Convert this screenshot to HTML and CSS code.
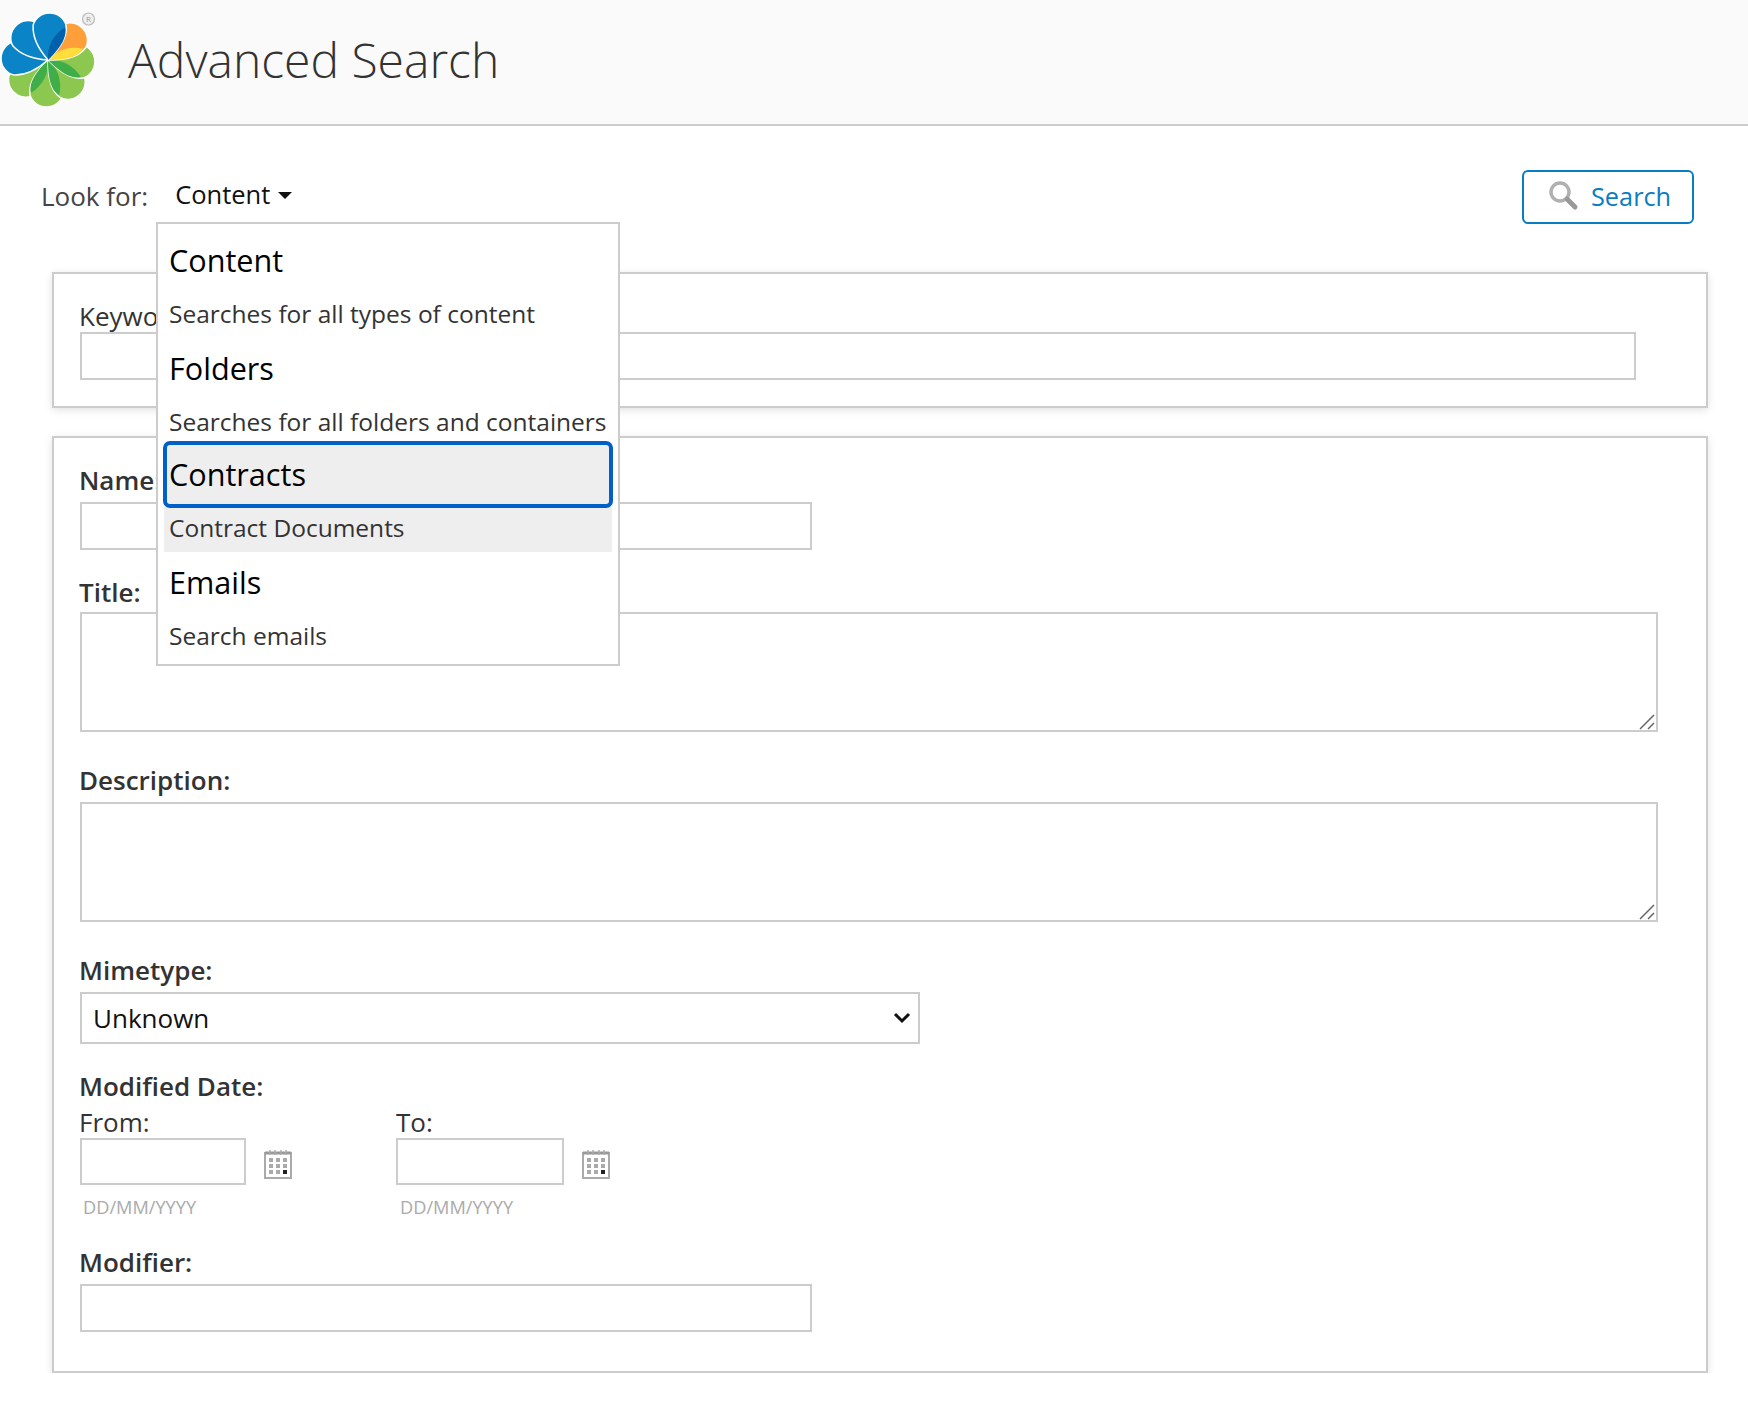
FILE: index.html
```html
<!DOCTYPE html>
<html lang="en">
<head>
    <meta charset="UTF-8">
    <meta name="viewport" content="width=device-width, initial-scale=1.0">
    <title>Advanced Search</title>
    <link rel="stylesheet" href="styles.css">
</head>
<body>
    <header class="page-header">
        <svg class="logo" width="110" height="124" viewBox="0 0 110 124">
            <defs>
                <path id="petal" d="M0 0C-7-8-15-20-14-33A16 15 0 0 1 17-33C19-20 8-8 0 0Z"/>
                <path id="fold" d="M0 0C-1-13 5-24 16-31C19-20 8-8 0 0Z" stroke="none"/>
            </defs>
            <g transform="translate(48 60) scale(1.06)" stroke="#fff" stroke-width="1.400">
                <g transform="rotate(225)" fill="#8cc850"><use href="#petal"/><use href="#fold" fill="#3fae49"/></g>
                <g transform="rotate(180)" fill="#8cc850"><use href="#petal"/><use href="#fold" fill="#3fae49"/></g>
                <g transform="rotate(135)" fill="#8cc850"><use href="#petal"/><use href="#fold" fill="#3fae49"/></g>
                <g transform="rotate(90)" fill="#8cc850"><use href="#petal"/><use href="#fold" fill="#3fae49"/></g>
                <g transform="rotate(45)" fill="#ff9f3a"><use href="#petal"/><use href="#fold" fill="#ffdd3c"/></g>
                <g transform="rotate(270)" fill="#0a84c6"><use href="#petal"/><use href="#fold" fill="#0060ac"/></g>
                <g transform="rotate(315)" fill="#0a84c6"><use href="#petal"/><use href="#fold" fill="#0060ac"/></g>
                <g fill="#0a84c6"><use href="#petal"/><use href="#fold" fill="#0060ac"/></g>
            </g>
            <circle cx="88.500" cy="19" r="6" fill="#eee" stroke="#bbb" stroke-width="1.200"/>
            <text x="88.500" y="22" class="logo-mark" text-anchor="middle">R</text>
        </svg>
        <h1 class="page-title">Advanced Search</h1>
    </header>

    <main class="content">
        <div class="toolbar">
            <span class="look-label">Look for:</span>
            <button type="button" class="look-value">Content<span class="caret"></span></button>
            <button type="button" class="search-btn">
                <svg width="32" height="32" viewBox="0 0 32 32">
                    <circle cx="13" cy="12" r="9" fill="#fff" stroke="#b0b0b0" stroke-width="3.500"/>
                    <path d="M20 19l8 8" stroke="#999" stroke-width="5" stroke-linecap="round"/>
                </svg>
                Search
            </button>
            <ul class="type-menu">
                <li class="type-item"><div class="type-name">Content</div><div class="type-desc">Searches for all types of content</div></li>
                <li class="type-item"><div class="type-name">Folders</div><div class="type-desc">Searches for all folders and containers</div></li>
                <li class="type-item active"><div class="type-name">Contracts</div><div class="type-desc">Contract Documents</div></li>
                <li class="type-item"><div class="type-name">Emails</div><div class="type-desc">Search emails</div></li>
            </ul>
        </div>

        <section class="panel panel-keywords">
            <label class="field-label plain">Keywords:</label>
            <input type="text" class="input wide">
        </section>

        <section class="panel panel-form">
            <div class="field">
                <label class="field-label">Name:</label>
                <input type="text" class="input medium">
            </div>
            <div class="field field-area">
                <label class="field-label tight">Title:</label>
                <div class="area-wrap">
                    <textarea class="input area"></textarea>
                    <svg class="grip" width="16" height="16" viewBox="0 0 16 16"><path d="M1 15L15 1M9 15l6-6" stroke="#666" stroke-width="1.500"/></svg>
                </div>
            </div>
            <div class="field field-area">
                <label class="field-label">Description:</label>
                <div class="area-wrap">
                    <textarea class="input area"></textarea>
                    <svg class="grip" width="16" height="16" viewBox="0 0 16 16"><path d="M1 15L15 1M9 15l6-6" stroke="#666" stroke-width="1.500"/></svg>
                </div>
            </div>
            <div class="field">
                <label class="field-label">Mimetype:</label>
                <div class="select-wrap">
                    <select class="select"><option>Unknown</option></select>
                    <svg class="chevron" width="18" height="12" viewBox="0 0 18 12"><path d="M2 2l7 7 7-7" fill="none" stroke="#111" stroke-width="3"/></svg>
                </div>
            </div>
            <div class="field">
                <label class="field-label tight">Modified Date:</label>
                <div class="date-row">
                    <div class="date-col">
                        <label class="date-label">From:</label>
                        <div class="date-input">
                            <input type="text" class="input date">
                            <svg class="calendar" width="30" height="30" viewBox="0 0 30 30">
                                <rect x="2" y="4" width="26" height="25" fill="#fff" stroke="#aaa" stroke-width="2"/>
                                <path d="M2 4h26" stroke="#999" stroke-width="3"/>
                                <path d="M7 1v5M12 1v5M18 1v5M23 1v5" stroke="#aaa" stroke-width="1.500"/>
                                <g fill="#aaa">
                                    <rect x="6" y="9" width="4" height="4"/><rect x="13" y="9" width="4" height="4"/><rect x="20" y="9" width="4" height="4"/>
                                    <rect x="6" y="15" width="4" height="4"/><rect x="13" y="15" width="4" height="4"/><rect x="20" y="15" width="4" height="4"/>
                                    <rect x="6" y="21" width="4" height="4"/><rect x="13" y="21" width="4" height="4"/><rect x="20" y="21" width="4" height="4" fill="#222"/>
                                </g>
                            </svg>
                        </div>
                        <div class="date-hint">DD/MM/YYYY</div>
                    </div>
                    <div class="date-col date-to">
                        <label class="date-label">To:</label>
                        <div class="date-input">
                            <input type="text" class="input date">
                            <svg class="calendar" width="30" height="30" viewBox="0 0 30 30">
                                <rect x="2" y="4" width="26" height="25" fill="#fff" stroke="#aaa" stroke-width="2"/>
                                <path d="M2 4h26" stroke="#999" stroke-width="3"/>
                                <path d="M7 1v5M12 1v5M18 1v5M23 1v5" stroke="#aaa" stroke-width="1.500"/>
                                <g fill="#aaa">
                                    <rect x="6" y="9" width="4" height="4"/><rect x="13" y="9" width="4" height="4"/><rect x="20" y="9" width="4" height="4"/>
                                    <rect x="6" y="15" width="4" height="4"/><rect x="13" y="15" width="4" height="4"/><rect x="20" y="15" width="4" height="4"/>
                                    <rect x="6" y="21" width="4" height="4"/><rect x="13" y="21" width="4" height="4"/><rect x="20" y="21" width="4" height="4" fill="#222"/>
                                </g>
                            </svg>
                        </div>
                        <div class="date-hint">DD/MM/YYYY</div>
                    </div>
                </div>
            </div>
            <div class="field">
                <label class="field-label">Modifier:</label>
                <input type="text" class="input medium">
            </div>
        </section>
    </main>
</body>
</html>
```

FILE: styles.css
```css
* {
    box-sizing: border-box;
}

body {
    margin: 0;
    font-family: "Open Sans", "Noto Sans", sans-serif;
    color: #333;
    background: #fff;
}

.page-header {
    display: flex;
    align-items: center;
    height: 126px;
    background: #fafafa;
    border-bottom: 2px solid #ccc;
}

.logo {
    flex: none;
    filter: blur(0.4px);
}

.logo-mark {
    font-size: 8px;
    fill: #999;
}

.page-title {
    margin: 0 0 5px 18px;
    font-size: 48px;
    font-weight: 300;
    color: #333;
}

.content {
    padding-left: 52px;
    padding-right: 40px;
}

.toolbar {
    position: relative;
    display: flex;
    align-items: center;
    height: 146px;
    padding-bottom: 48px;
    padding-top: 44px;
    margin-left: -11px;
}

.look-label {
    font-size: 26px;
    color: #444;
    margin-bottom: 2px;
}

.look-value {
    display: flex;
    align-items: center;
    margin-left: 27px;
    margin-bottom: 6px;
    padding: 0;
    border: 0;
    background: none;
    font: inherit;
    font-size: 25.500px;
    color: #111;
}

.caret {
    margin-left: 8px;
    margin-top: 3px;
    border-left: 7px solid transparent;
    border-right: 7px solid transparent;
    border-top: 7px solid #111;
}

.search-btn {
    display: flex;
    align-items: center;
    gap: 12px;
    width: 172px;
    height: 54px;
    margin-left: auto;
    margin-right: 14px;
    padding: 0 0 2px 23px;
    border: 2px solid #0a7cc1;
    border-radius: 6px;
    background: #fff;
    font: inherit;
    font-size: 25.300px;
    color: #0a7cc1;
}

.type-menu {
    position: absolute;
    left: 115px;
    top: 96px;
    width: 464px;
    height: 444px;
    margin: 0;
    padding: 4px 6px 0 6px;
    list-style: none;
    background: #fff;
    border: 2px solid #ccc;
    z-index: 2;
}

.type-name {
    height: 65px;
    padding-left: 5px;
    font-size: 30.600px;
    line-height: 65px;
    color: #000;
}

.type-desc {
    height: 43px;
    padding-left: 5px;
    font-size: 24.500px;
    line-height: 41px;
    color: #333;
    white-space: nowrap;
}

.active {
    margin-top: -2px;
    margin-bottom: -2px;
}

.active .type-name {
    background: #eee;
    border-radius: 6px;
    outline: 4px solid #0060c8;
    outline-offset: -3px;
}

.active .type-desc {
    height: 45px;
    background: #eee;
}

.panel {
    border: 2px solid #ccc;
    box-shadow: 0 2px 8px rgba(0, 0, 0, 0.12);
    padding-left: 26px;
}

.panel-keywords {
    height: 136px;
    padding-top: 26px;
}

.panel-keywords .field-label {
    margin-bottom: 0;
}

.panel-form {
    height: 937px;
    margin-top: 28px;
    padding-top: 26px;
}

.field {
    margin-bottom: 26px;
}

.field-area {
    margin-bottom: 32px;
}

.field-label {
    display: block;
    height: 32px;
    margin-bottom: 6px;
    margin-left: -1px;
    font-size: 26px;
    line-height: 32px;
    font-weight: 600;
}

.field-label.plain {
    font-weight: 400;
}

.field-label.tight {
    margin-bottom: 4px;
}

.input {
    display: block;
    border: 2px solid #ccc;
    background: #fff;
    border-radius: 0;
    font: inherit;
}

.wide {
    width: 1556px;
    height: 48px;
}

.medium {
    width: 732px;
    height: 48px;
}

.area-wrap {
    position: relative;
    width: 1578px;
}

.area {
    width: 100%;
    height: 120px;
    resize: none;
}

.grip {
    position: absolute;
    right: 3px;
    bottom: 2px;
}

.select-wrap {
    position: relative;
    width: 840px;
}

.select {
    display: block;
    width: 100%;
    height: 52px;
    padding: 0 11px;
    border: 2px solid #ccc;
    border-radius: 0;
    background: #fff;
    font: inherit;
    font-size: 26px;
    color: #111;
    appearance: none;
}

.chevron {
    position: absolute;
    right: 9px;
    top: 20px;
}

.date-row {
    display: flex;
}

.date-col {
    width: 316px;
}

.date-label {
    display: block;
    height: 32px;
    margin-left: -1px;
    font-size: 26px;
    line-height: 32px;
}

.date-to .date-label {
    margin-left: 0;
}

.date-input {
    display: flex;
    align-items: center;
    gap: 17px;
}

.date {
    width: 166px;
    height: 47px;
}

.date-to .date {
    width: 168px;
}

.date-to .date-hint {
    padding-left: 4px;
}

.calendar {
    flex: none;
    margin-top: 4px;
}

.date-hint {
    margin-top: 9px;
    padding-left: 3px;
    font-size: 18.200px;
    line-height: 26px;
    color: #aaa;
}
```
